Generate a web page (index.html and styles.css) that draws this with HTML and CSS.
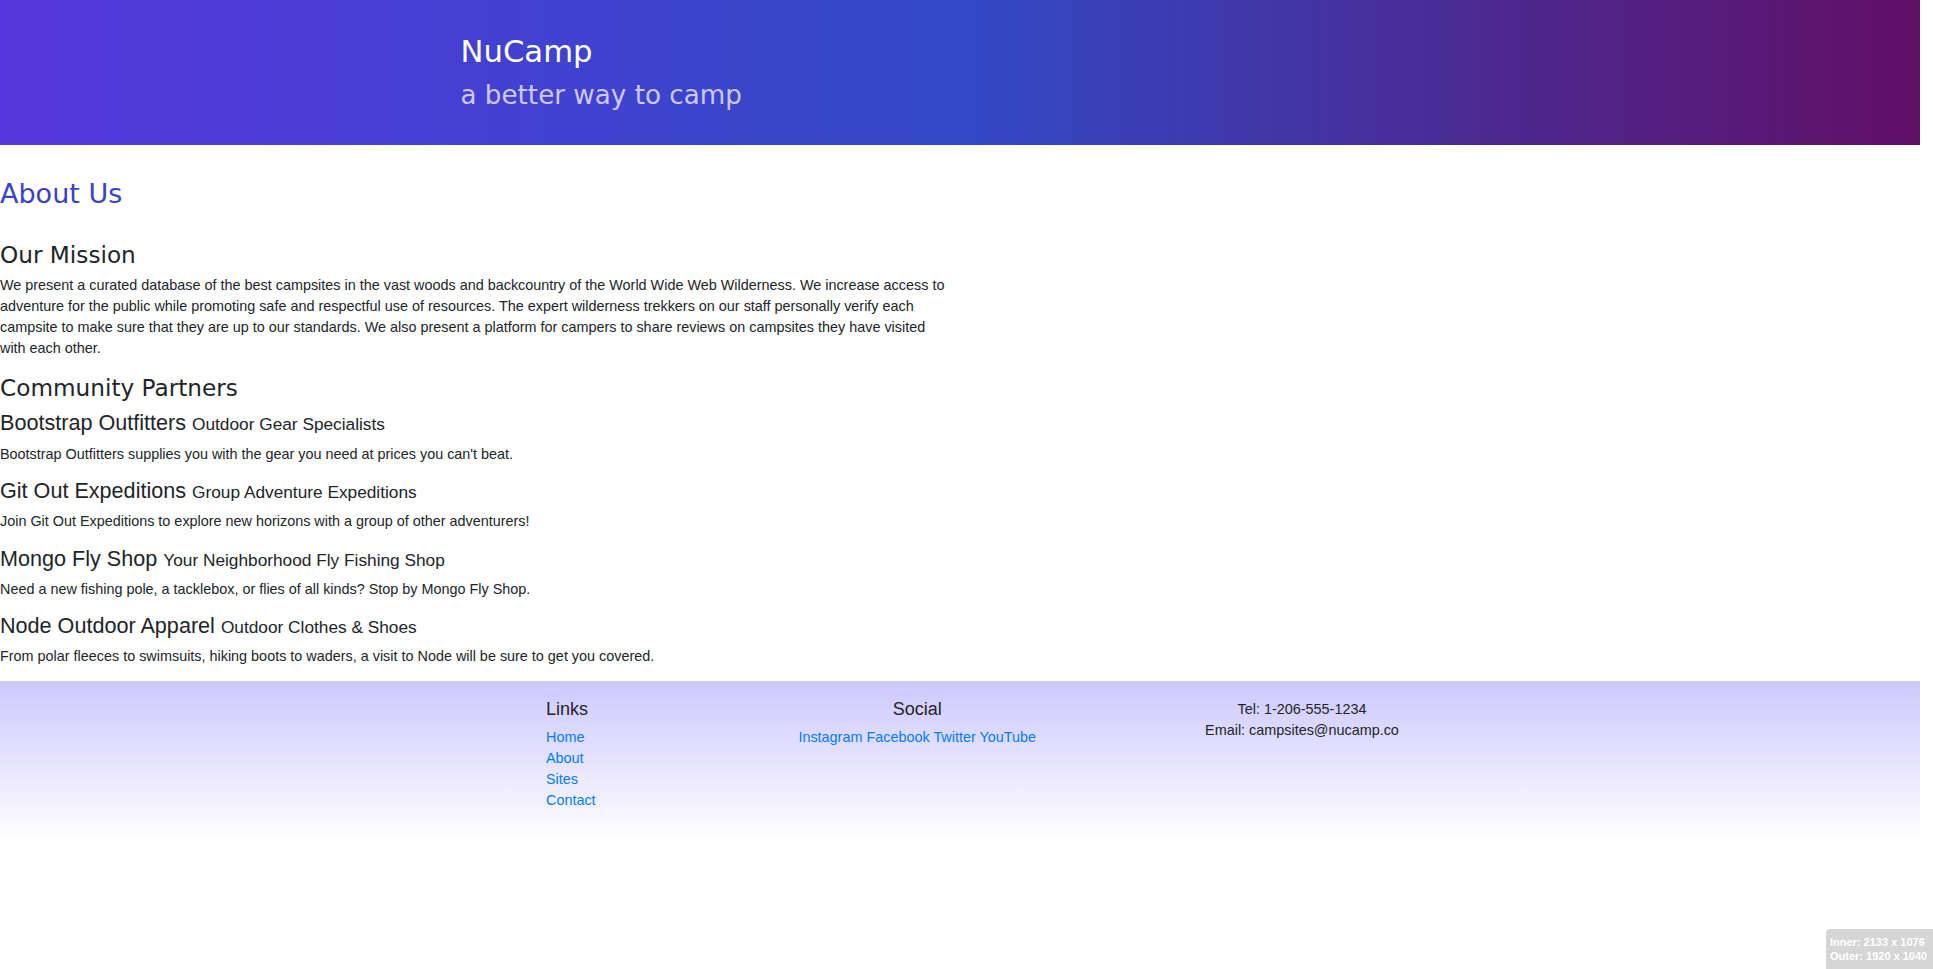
FILE: index.html
```html
<!DOCTYPE html>
<html lang="en">
<head>
<meta charset="utf-8">
<title>NuCamp - About Us</title>
<link rel="stylesheet" href="styles.css">
</head>
<body>
<div class="page">
  <header class="site-header">
    <div class="container">
      <h1 class="brand">NuCamp</h1>
      <h2 class="tagline">a better way to camp</h2>
    </div>
  </header>

  <main class="about">
    <div class="about-col">
      <h2 class="page-title">About Us</h2>
      <h3 class="section-title mission-title">Our Mission</h3>
      <p class="mission">We present a curated database of the best campsites in the vast woods and backcountry of the World Wide Web Wilderness. We increase access to adventure for the public while promoting safe and respectful use of resources. The expert wilderness trekkers on our staff personally verify each campsite to make sure that they are up to our standards. We also present a platform for campers to share reviews on campsites they have visited with each other.</p>

      <h3 class="section-title partners-title">Community Partners</h3>
      <div class="partner">
        <h4 class="partner-name">Bootstrap Outfitters <small>Outdoor Gear Specialists</small></h4>
        <p>Bootstrap Outfitters supplies you with the gear you need at prices you can't beat.</p>
      </div>
      <div class="partner">
        <h4 class="partner-name">Git Out Expeditions <small>Group Adventure Expeditions</small></h4>
        <p>Join Git Out Expeditions to explore new horizons with a group of other adventurers!</p>
      </div>
      <div class="partner">
        <h4 class="partner-name">Mongo Fly Shop <small>Your Neighborhood Fly Fishing Shop</small></h4>
        <p>Need a new fishing pole, a tacklebox, or flies of all kinds? Stop by Mongo Fly Shop.</p>
      </div>
      <div class="partner">
        <h4 class="partner-name">Node Outdoor Apparel <small>Outdoor Clothes &amp; Shoes</small></h4>
        <p>From polar fleeces to swimsuits, hiking boots to waders, a visit to Node will be sure to get you covered.</p>
      </div>
    </div>
  </main>

  <footer class="site-footer">
    <div class="container">
      <div class="footer-row">
        <div class="footer-col links-col">
          <h5 class="footer-heading">Links</h5>
          <ul class="footer-links">
            <li><a href="#">Home</a></li>
            <li><a href="#">About</a></li>
            <li><a href="#">Sites</a></li>
            <li><a href="#">Contact</a></li>
          </ul>
        </div>
        <div class="footer-col social-col">
          <h5 class="footer-heading">Social</h5>
          <a href="#">Instagram</a>
          <a href="#">Facebook</a>
          <a href="#">Twitter</a>
          <a href="#">YouTube</a>
        </div>
        <div class="footer-col contact-col">
          <a class="contact-link" href="#">Tel: 1-206-555-1234</a><br>
          <a class="contact-link" href="#">Email: campsites@nucamp.co</a>
        </div>
      </div>
    </div>
  </footer>
</div>
<div class="viewport-badge">Inner: 2133 x 1076<br>Outer: 1920 x 1040</div>
</body>
</html>
```

FILE: styles.css
```css
* { box-sizing: border-box; }
html, body { margin: 0; padding: 0; }
body {
  font-family: "Liberation Sans", Arial, sans-serif;
  font-size: 14.4px;
  line-height: 21px;
  color: #212529;
  background: #fff;
}
.page { width: 1920px; }

.site-header {
  height: 145px;
  padding-top: 30px;
  background-image: linear-gradient(to right, #5637DD 0%, #3249C6 50%, #610F66 100%);
}
.container {
  width: 1026px;
  margin: 0 auto;
  padding: 0 13.5px;
}
.brand {
  margin: 0 0 7.4px;
  font-family: "DejaVu Sans", sans-serif;
  font-weight: normal;
  font-size: 30.7px;
  line-height: 43px;
  color: #ffffff;
}
.tagline {
  margin: 0;
  font-family: "DejaVu Sans", sans-serif;
  font-weight: normal;
  font-size: 26.2px;
  line-height: 31px;
  color: #CEC8FF;
}

.about { padding-top: 31.65px; }
.about-col { width: 946.5px; }
.page-title {
  margin: 0 0 29.05px;
  font-family: "DejaVu Sans", sans-serif;
  font-weight: normal;
  font-size: 27px;
  line-height: 34px;
  color: #3a41c8;
}
.section-title {
  margin: 0;
  font-family: "DejaVu Sans", sans-serif;
  font-weight: normal;
  font-size: 23.2px;
  line-height: 30px;
  color: #212529;
}
.mission-title { margin-bottom: 5.3px; }
.mission { margin: 0 0 14.4px; }
.partners-title { margin: 2.6px 0 7px; }
.partner-name {
  margin: 0 0 8.2px;
  font-size: 21.6px;
  line-height: 25px;
  font-weight: normal;
}
.partner-name small {
  font-size: 80%;
  line-height: 1;
}
.partner p { margin: 0 0 13.4px; }

.site-footer {
  padding: 18px 0;
  background-image: linear-gradient(#CEC8FF, #ffffff);
}
.footer-row {
  display: flex;
  margin: 0 -13.5px;
}
.footer-col { padding: 0 13.5px; }
.links-col { margin-left: 85.5px; width: 171px; }
.social-col { width: 427.5px; text-align: center; }
.contact-col { width: 342px; text-align: center; }
.footer-heading {
  margin: 0 0 7.2px;
  font-size: 18px;
  line-height: 21px;
  font-weight: normal;
}
.footer-links {
  list-style: none;
  margin: 0 0 14.4px;
  padding: 0;
}
a { color: #007bff; text-decoration: none; }
.contact-link { color: #212529; }

.viewport-badge {
  position: fixed;
  right: 0;
  bottom: 0;
  width: 107px;
  height: 40px;
  padding: 6px 0 0 4px;
  background: #d6d6d6;
  border-top-left-radius: 4px;
  color: #ffffff;
  font-family: "Liberation Sans", Arial, sans-serif;
  font-weight: bold;
  font-size: 11px;
  line-height: 14px;
}
```
